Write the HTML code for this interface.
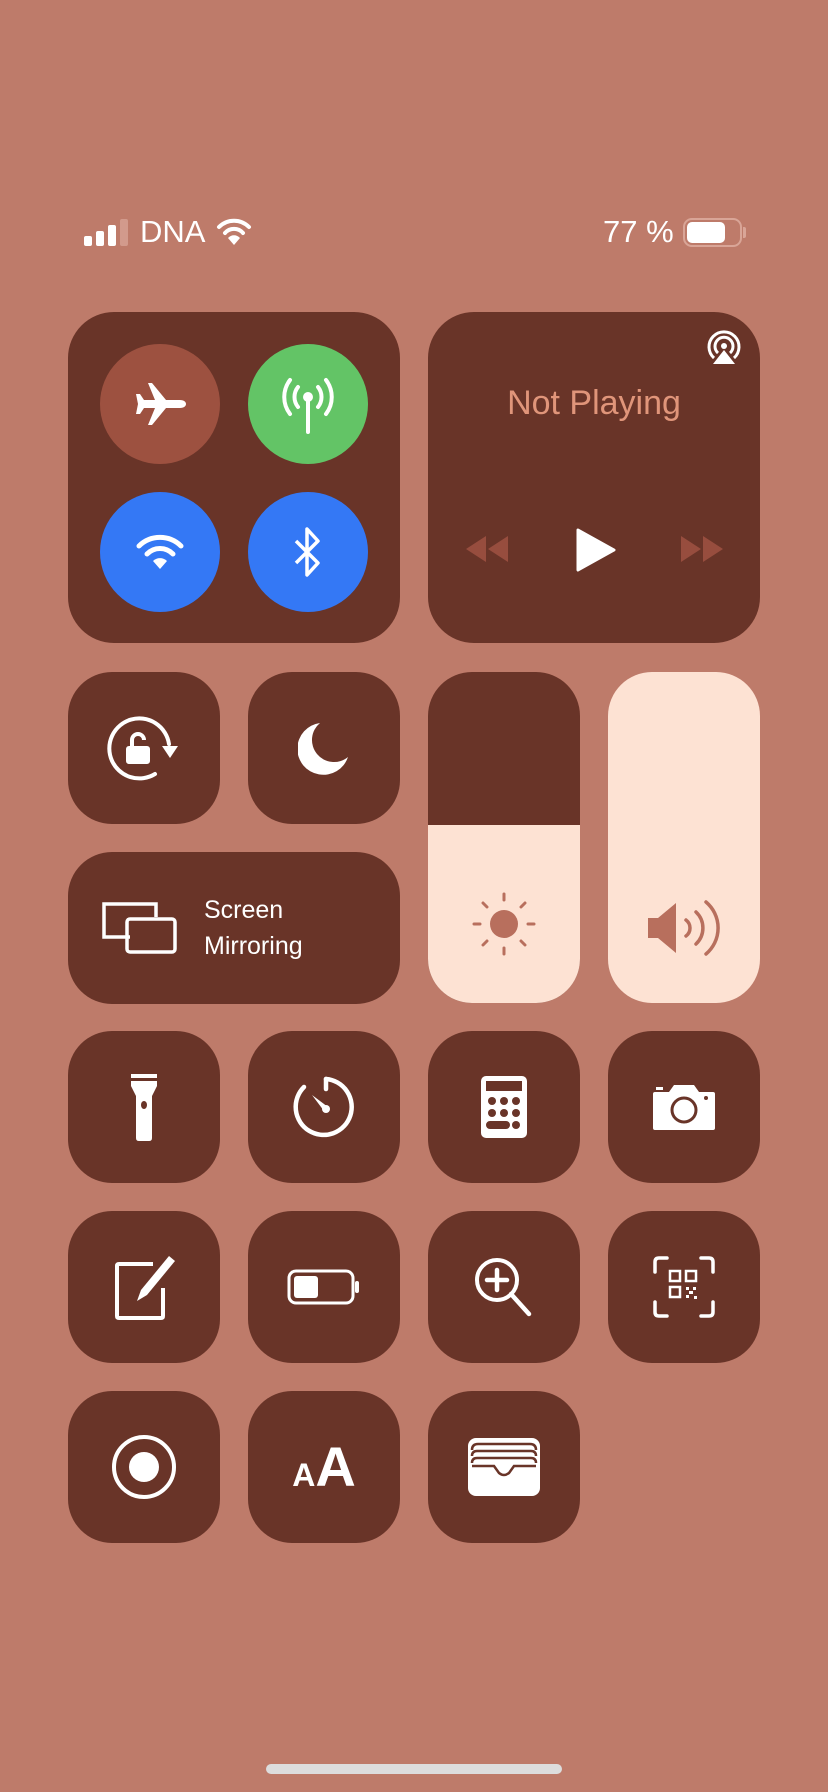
<!DOCTYPE html>
<html><head><meta charset="utf-8"><style>
*{margin:0;padding:0;box-sizing:border-box}
body{width:828px;height:1792px;background:#be7b6a;position:relative;overflow:hidden;font-family:"Liberation Sans",sans-serif}
.t{position:absolute;background:#693428;border-radius:44px;width:152px;height:152px;display:flex;align-items:center;justify-content:center}
.c{position:absolute;width:120px;height:120px;border-radius:50%;display:flex;align-items:center;justify-content:center}
.abs{position:absolute}
</style></head><body>
<div class="abs" style="left:84px;top:220px;display:flex;align-items:flex-end;gap:4px;height:26px">
<div style="width:8px;height:10px;background:#fff;border-radius:2px"></div>
<div style="width:8px;height:15px;background:#fff;border-radius:2px"></div>
<div style="width:8px;height:21px;background:#fff;border-radius:2px"></div>
<div style="width:8px;height:27px;background:#d29a8c;border-radius:2px"></div>
</div>
<div class="abs" style="left:140px;top:214px;color:#fff;font-size:31px">DNA</div>
<svg class="abs" style="left:216px;top:218px" width="36" height="28" viewBox="0 0 36 28"><g fill="none" stroke="#fff" stroke-width="4" stroke-linecap="round"><path d="M3 9a21 21 0 0 1 30 0"/><path d="M9 15a12 12 0 0 1 18 0"/></g><path d="M12 20a8 8 0 0 1 12 0l-6 7z" fill="#fff"/></svg>
<div class="abs" style="left:603px;top:214px;color:#fff;font-size:31px">77 %</div>
<div class="abs" style="left:683px;top:218px;width:59px;height:29px;border:2px solid #d9a597;border-radius:9px"></div>
<div class="abs" style="left:687px;top:222px;width:38px;height:21px;background:#fff;border-radius:5px"></div>
<div class="abs" style="left:743px;top:227px;width:3px;height:11px;background:#d9a597;border-radius:0 2px 2px 0"></div>

<div class="t" style="left:68px;top:312px;width:332px;height:331px;border-radius:46px"></div>
<div class="c" style="left:100px;top:344px;background:#9d5140"><svg width="52" height="46" viewBox="0 0 52 46"><path d="M14 2h4l14 17h14c4 0 6 2 6 4s-2 4-6 4H32L18 44h-4l7-17H10l-4 6H2l2-10-2-10h4l4 6h11z" fill="#fff"/></svg></div>
<div class="c" style="left:248px;top:344px;background:#63c466"><svg width="56" height="60" viewBox="0 0 56 60"><g fill="none" stroke="#fff" stroke-width="4" stroke-linecap="round"><path d="M10 6a28 28 0 0 0 0 34M46 6a28 28 0 0 1 0 34M18 13a16 16 0 0 0 0 20M38 13a16 16 0 0 1 0 20M28 23v35"/></g><circle cx="28" cy="23" r="5" fill="#fff"/></svg></div>
<div class="c" style="left:100px;top:492px;background:#3478f5"><svg width="50" height="40" viewBox="0 0 50 40"><g fill="none" stroke="#fff" stroke-width="5" stroke-linecap="round"><path d="M4 14a30 30 0 0 1 42 0"/><path d="M12 22a18 18 0 0 1 26 0"/></g><path d="M18 29a10 10 0 0 1 14 0l-7 8z" fill="#fff"/></svg></div>
<div class="c" style="left:248px;top:492px;background:#3478f5"><svg width="30" height="52" viewBox="0 0 30 52"><path d="M3 15l22 22-11 12V3l11 12L3 37" fill="none" stroke="#fff" stroke-width="3.5" stroke-linejoin="round"/></svg></div>

<div class="t" style="left:428px;top:312px;width:332px;height:331px;border-radius:46px"></div>
<svg class="abs" style="left:704px;top:328px" width="40" height="40" viewBox="0 0 40 40"><g fill="none" stroke="#fff" stroke-width="3"><path d="M10 30a15 15 0 1 1 20 0"/><path d="M14 25a9 9 0 1 1 12 0"/></g><circle cx="20" cy="18" r="3" fill="#fff"/><path d="M20 22l11 14H9z" fill="#fff"/></svg>
<div class="abs" style="left:428px;top:384px;width:332px;text-align:center;color:#e0957a;font-size:34px">Not Playing</div>
<svg class="abs" style="left:464px;top:534px" width="46" height="30" viewBox="0 0 46 30"><path d="M22 2v26L2 15zM44 2v26L24 15z" fill="#974d3e"/></svg>
<svg class="abs" style="left:576px;top:528px" width="40" height="44" viewBox="0 0 40 44"><path d="M2 2l36 20L2 42z" fill="#fff" stroke="#fff" stroke-width="3" stroke-linejoin="round"/></svg>
<svg class="abs" style="left:679px;top:534px" width="46" height="30" viewBox="0 0 46 30"><path d="M2 2v26l20-13zM24 2v26l20-13z" fill="#974d3e"/></svg>

<div class="t" style="left:68px;top:672px"><svg width="74" height="68" viewBox="0 0 74 68"><path d="M62 30A30 30 0 1 0 48 60" fill="none" stroke="#fff" stroke-width="4" stroke-linecap="round"/><path d="M55 32h16l-8 12z" fill="#fff"/><rect x="19" y="32" width="24" height="18" rx="3" fill="#fff"/><path d="M25 32v-6a6 6 0 0 1 12 0" fill="none" stroke="#fff" stroke-width="4"/></svg></div>
<div class="t" style="left:248px;top:672px"><svg width="52" height="54" viewBox="0 0 52 54"><path d="M22 2A26 26 0 1 0 50 36 22 22 0 0 1 22 2z" fill="#fff"/></svg></div>
<div class="t" style="left:68px;top:852px;width:332px;justify-content:flex-start;padding-left:32px"><svg width="78" height="54" viewBox="0 0 78 54"><g fill="none" stroke="#fff" stroke-width="3.5"><path d="M30 36H4V3h52v13"/><rect x="27" y="18" width="48" height="33" rx="3"/></g></svg><div style="color:#fff;font-size:25px;line-height:36px;margin-left:26px">Screen<br>Mirroring</div></div>
<div class="abs" style="left:428px;top:672px;width:152px;height:331px;border-radius:44px;overflow:hidden;background:#693428"><div style="position:absolute;left:0;right:0;top:153px;bottom:0;background:#fde2d3"></div>
<svg style="position:absolute;left:44px;top:220px" width="64" height="64" viewBox="0 0 64 64"><circle cx="32" cy="32" r="14" fill="#b86f5d"/><g stroke="#b86f5d" stroke-width="3" stroke-linecap="round"><path d="M32 2v6M32 56v6M2 32h6M56 32h6M11 11l4 4M49 49l4 4M11 53l4-4M49 15l4-4"/></g></svg></div>
<div class="abs" style="left:608px;top:672px;width:152px;height:331px;border-radius:44px;background:#fde2d3">
<svg style="position:absolute;left:38px;top:226px" width="80" height="60" viewBox="0 0 80 60"><path d="M2 20h10L30 5v50L12 40H2z" fill="#b86f5d"/><g fill="none" stroke="#b86f5d" stroke-width="3.5" stroke-linecap="round"><path d="M40 22a10 10 0 0 1 0 16M50 14a22 22 0 0 1 0 32M60 4a34 34 0 0 1 0 52"/></g></svg></div>

<div class="t" style="left:68px;top:1031px"><svg width="30" height="70" viewBox="0 0 30 70"><rect x="2" y="2" width="26" height="4" fill="#fff"/><path d="M2 9h26v5l-5 10v42q0 3-3 3h-10q-3 0-3-3V24L2 14z" fill="#fff"/><ellipse cx="15" cy="33" rx="3" ry="4" fill="#693428"/></svg></div>
<div class="t" style="left:248px;top:1031px"><svg width="64" height="64" viewBox="0 0 64 64"><path d="M34 4a28 28 0 1 1-22 8" fill="none" stroke="#fff" stroke-width="4.5" stroke-linecap="round"/><path d="M34 4v10" stroke="#fff" stroke-width="4.5" stroke-linecap="round"/><path d="M20 20l16 12-4 4z" fill="#fff"/><circle cx="34" cy="34" r="4" fill="#fff"/></svg></div>
<div class="t" style="left:428px;top:1031px"><svg width="48" height="64" viewBox="0 0 48 64"><rect x="1" y="1" width="46" height="62" rx="5" fill="#fff"/><rect x="6" y="6" width="36" height="10" fill="#693428"/><g fill="#693428"><circle cx="12" cy="26" r="4"/><circle cx="24" cy="26" r="4"/><circle cx="36" cy="26" r="4"/><circle cx="12" cy="38" r="4"/><circle cx="24" cy="38" r="4"/><circle cx="36" cy="38" r="4"/><rect x="6" y="46" width="24" height="8" rx="4"/><circle cx="36" cy="50" r="4"/></g></svg></div>
<div class="t" style="left:608px;top:1031px"><svg width="66" height="50" viewBox="0 0 66 50"><path d="M4 10h14l5-7h20l5 7h14q2 0 2 2v34q0 2-2 2H4q-2 0-2-2V12q0-2 2-2z" fill="#fff"/><rect x="5" y="5" width="7" height="3" fill="#fff"/><circle cx="33" cy="28" r="12" fill="none" stroke="#693428" stroke-width="3"/><circle cx="55" cy="16" r="2" fill="#693428"/></svg></div>

<div class="t" style="left:68px;top:1211px"><svg width="70" height="70" viewBox="0 0 70 70"><path d="M44 12H10q-2 0-2 2v50q0 2 2 2h42q2 0 2-2V36" fill="none" stroke="#fff" stroke-width="4"/><path d="M60 4l6 5-28 34-10 6 4-11z" fill="#fff"/></svg></div>
<div class="t" style="left:248px;top:1211px"><svg width="74" height="36" viewBox="0 0 74 36"><rect x="2" y="2" width="64" height="32" rx="7" fill="none" stroke="#fff" stroke-width="3"/><rect x="7" y="7" width="24" height="22" rx="3" fill="#fff"/><rect x="68" y="12" width="4" height="12" rx="2" fill="#fff"/></svg></div>
<div class="t" style="left:428px;top:1211px"><svg width="62" height="62" viewBox="0 0 62 62"><circle cx="24" cy="24" r="20" fill="none" stroke="#fff" stroke-width="4"/><path d="M38 38l18 20M24 14v20M14 24h20" stroke="#fff" stroke-width="4.5" stroke-linecap="round"/></svg></div>
<div class="t" style="left:608px;top:1211px"><svg width="62" height="62" viewBox="0 0 62 62"><g fill="none" stroke="#fff" stroke-width="3.5" stroke-linecap="round"><path d="M14 2H6Q2 2 2 6v10M48 2h8q4 0 4 4v10M14 60H6q-4 0-4-4V46M48 60h8q4 0 4-4V46"/></g><g fill="none" stroke="#fff" stroke-width="2.5"><rect x="17" y="15" width="10" height="10"/><rect x="33" y="15" width="10" height="10"/><rect x="17" y="31" width="10" height="10"/></g><g fill="#fff"><rect x="33" y="31" width="3" height="3"/><rect x="40" y="31" width="3" height="3"/><rect x="36" y="35" width="4" height="3"/><rect x="33" y="39" width="3" height="3"/><rect x="41" y="40" width="3" height="3"/></g></svg></div>

<div class="t" style="left:68px;top:1391px"><svg width="66" height="66" viewBox="0 0 66 66"><circle cx="33" cy="33" r="30" fill="none" stroke="#fff" stroke-width="4"/><circle cx="33" cy="33" r="15" fill="#fff"/></svg></div>
<div class="t" style="left:248px;top:1391px"><div style="color:#fff;font-family:'Liberation Sans',sans-serif;line-height:1;font-weight:bold"><span style="font-size:32px">A</span><span style="font-size:56px">A</span></div></div>
<div class="t" style="left:428px;top:1391px"><svg width="72" height="58" viewBox="0 0 72 58"><rect x="0" y="0" width="72" height="58" rx="8" fill="#fff"/><g fill="none" stroke="#693428" stroke-width="2.5"><path d="M4 12q0-6 6-6h52q6 0 6 6M4 18q0-5 5-5h54q5 0 5 5M4 25q0-5 5-5h54q5 0 5 5"/></g><path d="M4 28h22l5 7q5 4 10 0l5-7h22" fill="none" stroke="#693428" stroke-width="2.5"/></svg></div>

<div class="abs" style="left:266px;top:1764px;width:296px;height:10px;border-radius:5px;background:#ddd"></div>
</body></html>
